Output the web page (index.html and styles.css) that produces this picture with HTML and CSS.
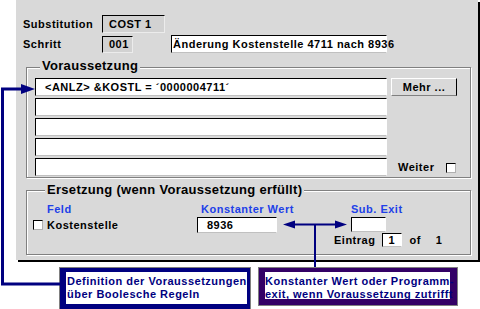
FILE: index.html
```html
<!DOCTYPE html>
<html lang="de">
<head>
    <meta charset="UTF-8">
    <title>Substitution COST 1</title>
    <link rel="stylesheet" href="styles.css">
</head>
<body>
    <div class="window">
        <div class="row">
            <span class="lbl">Substitution</span>
            <span class="ro ro-subst">COST 1</span>
        </div>
        <div class="row row-step">
            <span class="lbl">Schritt</span>
            <span class="ro ro-step">001</span>
            <span class="field field-desc">Änderung Kostenstelle 4711 nach 8936</span>
        </div>

        <div class="group group-cond">
            <span class="legend">Voraussetzung</span>
            <div class="cond-body">
                <div class="cond-lines">
                    <div class="field line">&lt;ANLZ&gt; &amp;KOSTL = ´0000004711´</div>
                    <div class="field line"></div>
                    <div class="field line"></div>
                    <div class="field line"></div>
                    <div class="field line"></div>
                </div>
                <div class="cond-side">
                    <button class="btn">Mehr ...</button>
                    <label class="weiter">Weiter <span class="check"></span></label>
                </div>
            </div>
        </div>

        <div class="group group-subst">
            <span class="legend legend-subst">Ersetzung (wenn Voraussetzung erfüllt)</span>
            <div class="subst-grid">
                <span class="head head-feld">Feld</span>
                <span class="head head-wert">Konstanter Wert</span>
                <span class="head">Sub. Exit</span>
                <label class="fld"><span class="check"></span>Kostenstelle</label>
                <span class="field val">8936</span>
                <span class="field exit"></span>
            </div>
            <div class="entry">
                <span>Eintrag</span>
                <span class="field num">1</span>
                <span class="of">of</span>
                <span class="total">1</span>
            </div>
        </div>
    </div>

    <div class="notes">
        <div class="note note-cond">
            <div class="note-in">Definition der Voraussetzungen<br>über Boolesche Regeln</div>
        </div>
        <div class="note note-exit">
            <div class="note-in">Konstanter Wert oder Programm-<br>exit, wenn Voraussetzung zutrifft</div>
        </div>
    </div>

    <!-- connector arrows drawn over the form -->
    <svg class="wires" width="480" height="309" viewBox="0 0 480 309">
        <g fill="none" stroke="#000080">
            <polyline points="60,284 2.5,284 2.5,89 24,89" stroke-width="3"/>
            <line x1="292" y1="224.5" x2="338" y2="224.5" stroke-width="2"/>
            <line x1="315" y1="224" x2="315" y2="267" stroke-width="2"/>
        </g>
        <g fill="#000080">
            <polygon points="21,84 35,89 21,94"/>
            <polygon points="283,224.5 295,220.5 295,228.5"/>
            <polygon points="347,224.5 335,220.5 335,228.5"/>
        </g>
    </svg>
</body>
</html>
```

FILE: styles.css
```css
body {
    margin: 0;
    width: 480px;
    height: 309px;
    overflow: hidden;
    position: relative;
    background: #fff;
    color: #000;
    font: bold 11px/13px "Liberation Sans", Arial, sans-serif;
    letter-spacing: 0.5px;
}
.window {
    margin-left: 16px;
    width: 462px;
    height: 260px;
    box-sizing: border-box;
    padding-top: 15px;
    background: #d9d9d9;
    box-shadow: 2px 2px 0 #000;
}
.row {
    display: flex;
    align-items: flex-start;
    margin-left: 7px;
    height: 18px;
}
.row-step {
    margin-top: 2px;
}
.lbl {
    width: 79px;
    line-height: 18px;
}
.ro {
    box-sizing: border-box;
    padding-left: 6px;
    background: #d2d2d2;
    border-top: 1px solid #000;
    border-left: 1px solid #000;
    border-right: 1px solid #ececec;
    border-bottom: 1px solid #ececec;
}
.ro-subst {
    width: 63px;
    height: 18px;
    line-height: 16px;
}
.ro-step {
    width: 31px;
    height: 17px;
    line-height: 15px;
    align-self: flex-end;
}
.field {
    box-sizing: border-box;
    background: #fff;
    border-top: 1px solid #000;
    border-left: 1px solid #000;
    border-right: 1px solid #fff;
    border-bottom: 1px solid #c0c0c0;
    white-space: nowrap;
}
.field-desc {
    width: 216px;
    height: 18px;
    margin-left: 38px;
    padding-left: 1px;
    line-height: 16px;
}

/* group boxes */
.group {
    margin-left: 10px;
    width: 445px;
    box-sizing: border-box;
    border: 1px solid #808080;
    box-shadow: 1px 1px 0 #fff, inset 1px 1px 0 #fff;
}
.group-cond {
    margin-top: 14px;
    padding-bottom: 1px;
}
.group-subst {
    margin-top: 12px;
    padding-bottom: 7px;
}
.legend {
    display: block;
    width: fit-content;
    height: 16px;
    margin: -10px 0 0 13px;
    padding: 0 2px;
    background: #d9d9d9;
    font-size: 13px;
    line-height: 16px;
    letter-spacing: 0.3px;
}
.legend-subst {
    margin: -9px 0 0 18px;
}
.cond-body {
    display: flex;
    gap: 4px;
    margin-top: 4px;
    padding-left: 8px;
}
.cond-lines {
    display: flex;
    flex-direction: column;
    gap: 2px;
    width: 352px;
}
.line {
    height: 18px;
    padding-left: 9px;
    line-height: 16px;
}
.cond-side {
    width: 66px;
    display: flex;
    flex-direction: column;
    justify-content: space-between;
}
.btn {
    height: 18px;
    padding: 0;
    font: inherit;
    letter-spacing: inherit;
    color: #000;
    background: #d9d9d9;
    border: 1px solid;
    border-color: #fff #000 #808080 #fff;
}
.weiter {
    display: flex;
    align-items: center;
    justify-content: space-between;
    padding: 0 1px 0 7px;
    margin-bottom: 2px;
}
.check {
    width: 10px;
    height: 10px;
    box-sizing: border-box;
    background: #fff;
    border: 1px solid;
    border-color: #000 #b0b0b0 #b0b0b0 #000;
}

/* substitution area */
.subst-grid {
    display: grid;
    grid-template-columns: 164px 154px auto;
    row-gap: 1px;
    align-items: center;
    margin-top: 5px;
    padding-left: 6px;
}
.head {
    color: #2040e8;
}
.head-feld {
    margin-left: 14px;
}
.head-wert {
    margin-left: 4px;
}
.fld {
    display: flex;
    align-items: center;
    gap: 4px;
}
.val {
    width: 80px;
    height: 16px;
    padding-left: 9px;
    line-height: 14px;
}
.exit {
    width: 35px;
    height: 15px;
    align-self: start;
}
.entry {
    display: flex;
    align-items: center;
    height: 14px;
    margin-left: 307px;
}
.num {
    width: 20px;
    height: 14px;
    margin-left: 7px;
    padding-left: 5px;
    line-height: 12px;
}
.of {
    margin-left: 7px;
}
.total {
    margin-left: 15px;
}

/* explanation boxes */
.notes {
    display: flex;
    align-items: flex-start;
    gap: 7px;
    margin-top: 7px;
    padding-left: 59px;
}
.note {
    box-sizing: border-box;
    border: 1px solid #808080;
}
.note-cond {
    width: 192px;
    height: 43px;
}
.note-exit {
    width: 200px;
    height: 39px;
}
.note-in {
    height: 100%;
    box-sizing: border-box;
    padding-top: 3px;
    background: #fff;
    color: #000080;
    white-space: nowrap;
}
.note-cond .note-in {
    border: solid #000080;
    border-width: 4px 3px 5px 6px;
    padding-left: 1px;
}
.note-exit .note-in {
    border: solid #330066;
    border-width: 4px 7px 6px 6px;
}
.wires {
    position: absolute;
    left: 0;
    top: 0;
    pointer-events: none;
}
```
